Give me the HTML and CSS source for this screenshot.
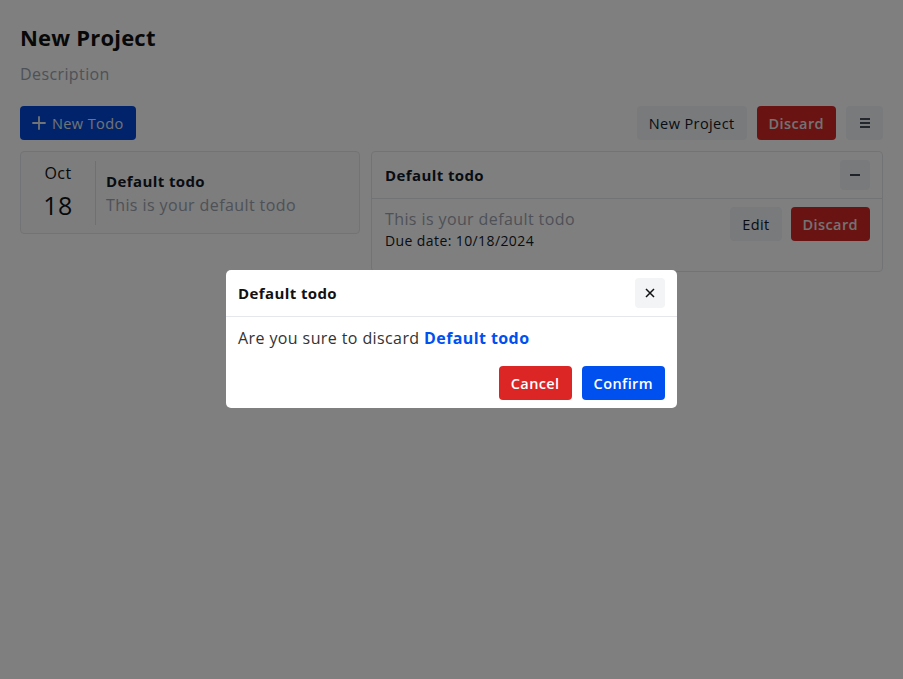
FILE: index.html
```html
<!DOCTYPE html>
<html>
<head>
<meta charset="utf-8">
<link rel="stylesheet" href="styles.css">
</head>
<body>
<div class="page">
  <h1 class="title">New Project</h1>
  <p class="desc">Description</p>
  <div class="toolbar">
    <button class="btn btn-primary"><svg width="14" height="14" viewBox="0 0 14 14"><path d="M7 1v12M1 7h12" stroke="currentColor" stroke-width="1.8" stroke-linecap="round"/></svg>New Todo</button>
    <div class="spacer"></div>
    <button class="btn btn-light">New Project</button>
    <button class="btn btn-danger">Discard</button>
    <button class="btn btn-light btn-icon"><svg width="14" height="14" viewBox="0 0 14 14"><path d="M2 3h10M2 7h10M2 11h10" stroke="currentColor" stroke-width="1.6"/></svg></button>
  </div>
  <div class="columns">
    <div class="card todo-item">
      <div class="date">
        <span class="month">Oct</span>
        <span class="day">18</span>
      </div>
      <div class="item-text">
        <div class="item-title">Default todo</div>
        <div class="item-desc">This is your default todo</div>
      </div>
    </div>
    <div class="card detail">
      <div class="detail-head">
        <div class="detail-title">Default todo</div>
        <button class="btn btn-light btn-sq"><svg width="12" height="12" viewBox="0 0 12 12"><path d="M1 6h10" stroke="currentColor" stroke-width="1.6"/></svg></button>
      </div>
      <div class="detail-body">
        <div class="detail-text">
          <div class="item-desc">This is your default todo</div>
          <div class="due">Due date: 10/18/2024</div>
        </div>
        <button class="btn btn-light">Edit</button>
        <button class="btn btn-danger">Discard</button>
      </div>
    </div>
  </div>
</div>
<div class="overlay"></div>
<div class="modal-wrap">
  <div class="modal">
    <div class="modal-head">
      <div class="modal-title">Default todo</div>
      <button class="btn btn-light btn-sq close"><svg width="10" height="10" viewBox="0 0 10 10"><path d="M1 1l8 8M9 1l-8 8" stroke="currentColor" stroke-width="1.5"/></svg></button>
    </div>
    <div class="modal-body">Are you sure to discard <strong class="hl">Default todo</strong></div>
    <div class="modal-foot">
      <button class="btn btn-red">Cancel</button>
      <button class="btn btn-blue">Confirm</button>
    </div>
  </div>
</div>
</body>
</html>
```

FILE: styles.css
```css
* { box-sizing: border-box; }
html, body { margin: 0; padding: 0; background: #fff; }
body {
  font-family: "Open Sans", "Noto Sans", sans-serif;
  color: #111827;
  letter-spacing: 0.4px;
  width: 903px;
  height: 679px;
  overflow: hidden;
}
.page { padding: 22px 20px 0 20px; }
.title { margin: 0; font-size: 22px; font-weight: 700; line-height: 30px; color: #111; letter-spacing: 0.2px; }
.desc { margin: 9px 0 0 0; font-size: 16px; line-height: 26px; color: #9ca3af; }
.toolbar { display: flex; align-items: center; gap: 10px; margin-top: 19px; }
.spacer { flex: 1; }
.btn {
  font-family: inherit;
  letter-spacing: inherit;
  border: none;
  border-radius: 4px;
  height: 34px;
  padding: 0 12px;
  font-size: 14.5px;
  font-weight: 500;
  display: inline-flex;
  align-items: center;
  justify-content: center;
  gap: 6px;
  cursor: pointer;
}
.btn-primary { background: #0047d6; color: #e5e7eb; }
.btn-light { background: #f3f4f6; color: #111827; }
.btn-danger { background: #d32727; color: #e6e6e6; font-weight: 600; }
.btn-icon { width: 37px; padding: 0; }
.btn-sq { width: 30px; height: 30px; padding: 0; }
.columns { display: grid; grid-template-columns: 340px 1fr; gap: 11px; margin-top: 11px; align-items: start; }
.card { border: 1px solid #e5e7eb; border-radius: 4px; background: #fafafa; }
.todo-item { display: flex; height: 83px; align-items: center; padding: 8px 0; }
.date { width: 75px; display: flex; flex-direction: column; align-items: center; border-right: 1px solid #e0e0e0; height: 64px; justify-content: center; padding-bottom: 4px; }
.month { font-size: 16px; line-height: 24px; color: #111; margin-bottom: 4px; }
.day { font-size: 25px; line-height: 32px; color: #111; }
.item-text { padding-left: 10px; }
.item-title { font-size: 15px; font-weight: 700; line-height: 24px; }
.item-desc { font-size: 16px; line-height: 24px; color: #9ca3af; }
.detail { background: #fff; }
.detail-head { display: flex; align-items: center; justify-content: space-between; padding: 8px 12px 8px 13px; border-bottom: 1px solid #e5e7eb; height: 47px; }
.detail-title { font-size: 15px; font-weight: 700; }
.detail-body { display: flex; align-items: flex-start; gap: 9px; padding: 8px 12px 20px 13px; }
.detail-text { flex: 1; }
.due { font-size: 14px; line-height: 20px; color: #111827; }
.overlay { position: fixed; inset: 0; background: rgba(0,0,0,0.5); }
.modal-wrap { position: fixed; inset: 0; display: flex; justify-content: center; align-items: flex-start; padding-top: 270px; }
.modal { width: 451px; background: #fff; border-radius: 5px; }
.modal-head { display: flex; align-items: center; justify-content: space-between; height: 47px; padding: 0 12px; border-bottom: 1px solid #e5e7eb; }
.modal-title { font-size: 15px; font-weight: 700; color: #111; }
.close { color: #111; }
.modal-body { padding: 10px 12px 0 12px; font-size: 16px; line-height: 22px; color: #333; }
.hl { color: #0050f0; font-weight: 700; }
.modal-foot { display: flex; justify-content: flex-end; gap: 10px; padding: 17px 12px 8px 12px; }
.btn-red { background: #dc2626; color: #fff; font-weight: 600; }
.btn-blue { background: #0050f0; color: #fff; font-weight: 600; }
```
